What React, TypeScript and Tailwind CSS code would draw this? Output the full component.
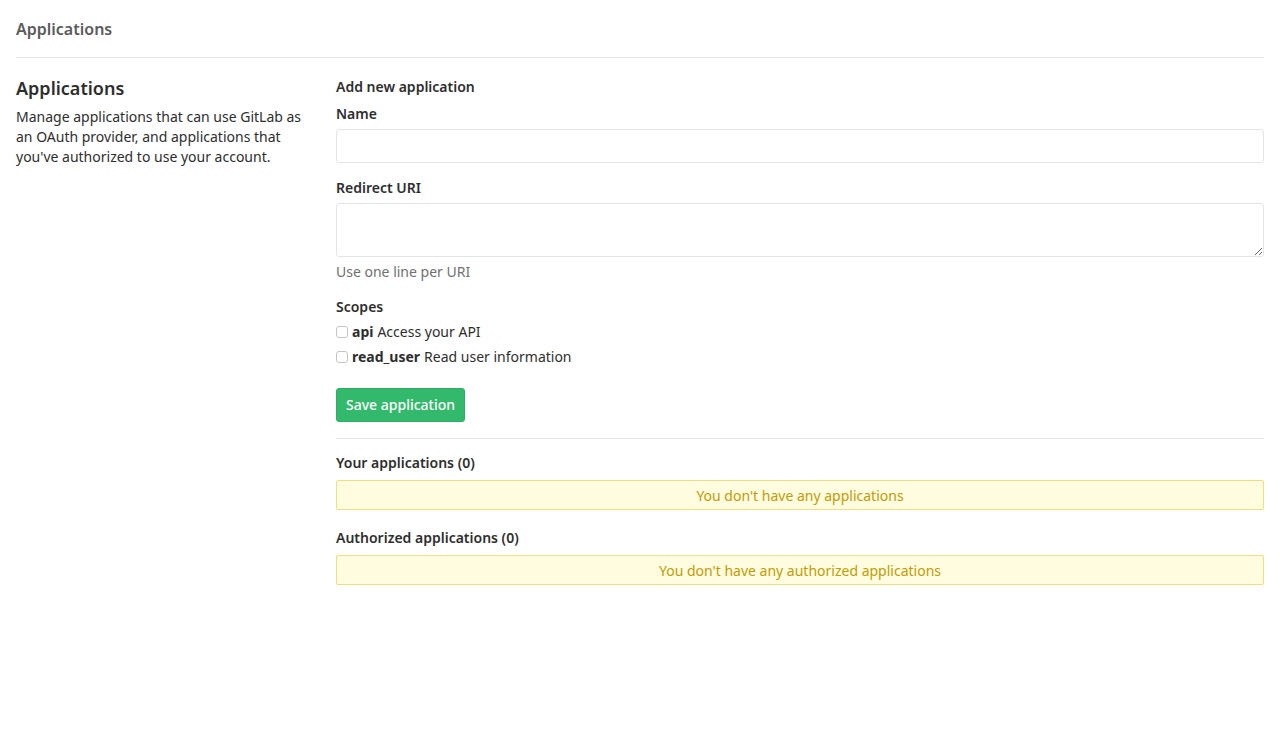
export default function App() {
  const font = { fontFamily: '"Noto Sans", "Liberation Sans", sans-serif' };
  return (
    <div className="min-h-[749px] bg-white text-[14px] text-[#2e2e2e] px-4" style={font}>
      <div className="h-[58px] border-b border-[#e5e5e5] flex items-center">
        <h3 className="text-[16px] font-semibold text-[#5c5c5c] leading-none mt-[1px]">Applications</h3>
      </div>
      <div className="flex pt-[19px]">
        <div className="w-[320px] pr-[16px] shrink-0">
          <h4 className="text-[18px] font-semibold leading-[24px] text-[#2e2e2e] mt-[-1px]">Applications</h4>
          <p className="leading-[20px] mt-[7px] text-[#2e2e2e]">
            Manage applications that can use GitLab as an OAuth provider, and applications that you've authorized to use your account.
          </p>
        </div>
        <div className="flex-1">
          <h5 className="font-semibold leading-[20px]">Add new application</h5>
          <div className="mt-[7px] font-semibold leading-[20px]">Name</div>
          <input className="mt-[5px] block w-full h-[34px] border border-[#e5e5e5] rounded-[3px] px-2 outline-none" />
          <div className="mt-[15px] font-semibold leading-[20px]">Redirect URI</div>
          <textarea className="mt-[5px] block w-full h-[54px] border border-[#e5e5e5] rounded-[3px] px-2 outline-none" />
          <div className="mt-[5px] leading-[20px] text-[#707070]">Use one line per URI</div>
          <div className="mt-[15px] font-semibold leading-[20px]">Scopes</div>
          <div className="mt-[5px] flex items-center leading-[20px]">
            <span className="w-[12px] h-[12px] border border-[#c4c4c4] rounded-[3px] mr-[4px] bg-white" />
            <span className="font-bold">api</span>
            <span className="ml-[4px]">Access your API</span>
          </div>
          <div className="mt-[5px] flex items-center leading-[20px]">
            <span className="w-[12px] h-[12px] border border-[#c4c4c4] rounded-[3px] mr-[4px] bg-white" />
            <span className="font-bold">read_user</span>
            <span className="ml-[4px]">Read user information</span>
          </div>
          <button className="mt-[21px] h-[34px] px-[9px] rounded-[3px] bg-[#33b96c] border border-[#2fad64] text-white text-[14px] font-medium leading-none">
            Save application
          </button>
          <div className="mt-[16px] border-t border-[#e5e5e5]" />
          <h5 className="mt-[14px] font-semibold leading-[20px]">Your applications (0)</h5>
          <div className="mt-[7px] h-[30px] flex items-center justify-center border border-[#f2dd82] bg-[#fffcdf] rounded-[2px] text-[#c29b05]">
            You don't have any applications
          </div>
          <h5 className="mt-[18px] font-semibold leading-[20px]">Authorized applications (0)</h5>
          <div className="mt-[7px] h-[30px] flex items-center justify-center border border-[#f2dd82] bg-[#fffcdf] rounded-[2px] text-[#c29b05]">
            You don't have any authorized applications
          </div>
        </div>
      </div>
    </div>
  );
}
